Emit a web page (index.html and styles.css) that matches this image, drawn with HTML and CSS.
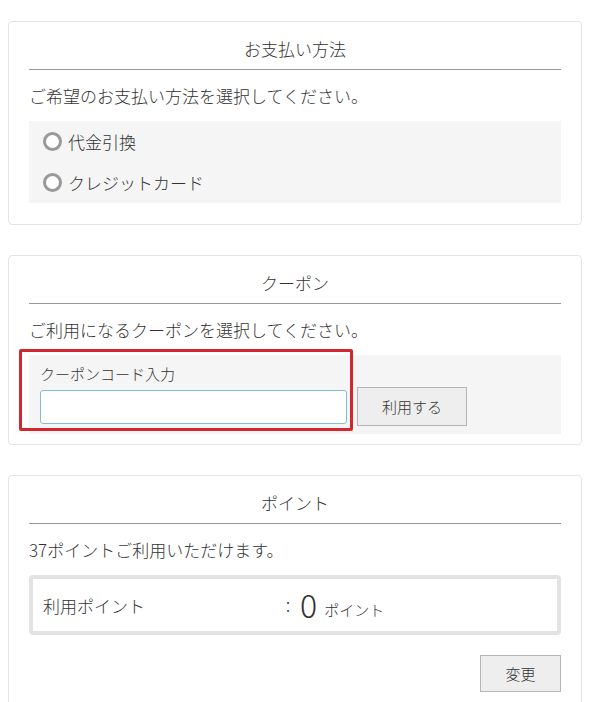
FILE: index.html
```html
<!DOCTYPE html>
<html lang="ja">
<head>
<meta charset="utf-8">
<link rel="stylesheet" href="styles.css">
</head>
<body>
<section class="card card-pay">
  <h2 class="card-title">お支払い方法</h2>
  <p class="desc">ご希望のお支払い方法を選択してください。</p>
  <div class="panel pay-list">
    <label class="radio-row"><span class="radio"></span>代金引換</label>
    <label class="radio-row"><span class="radio"></span>クレジットカード</label>
  </div>
</section>

<section class="card card-coupon">
  <h2 class="card-title">クーポン</h2>
  <p class="desc">ご利用になるクーポンを選択してください。</p>
  <div class="panel coupon">
    <div class="coupon-label">クーポンコード入力</div>
    <div class="coupon-row">
      <input class="coupon-input" type="text">
      <button class="btn btn-use">利用する</button>
    </div>
    <div class="highlight"></div>
  </div>
</section>

<section class="card">
  <h2 class="card-title">ポイント</h2>
  <p class="desc">37ポイントご利用いただけます。</p>
  <div class="point-box">
    <span class="point-label">利用ポイント</span>
    <span class="point-colon">：</span>
    <span class="point-value">0</span>
    <span class="point-unit">ポイント</span>
  </div>
  <div class="actions">
    <button class="btn btn-change">変更</button>
  </div>
</section>
</body>
</html>
```

FILE: styles.css
```css
html, body {
  margin: 0;
  padding: 0;
  background: #fff;
}
body {
  padding: 21px 9px 0 8px;
  font-family: "Noto Sans CJK JP", "Noto Sans", sans-serif;
  font-weight: 300;
  color: #333;
  font-size: 17px;
}
.card {
  border: 1px solid #e4e4e4;
  border-radius: 4px;
  padding: 15px 20px 20px;
  margin-bottom: 30px;
}
.card-pay {
  padding-bottom: 21px;
}
.card-coupon {
  padding-bottom: 10px;
}
.card-title {
  margin: 0;
  font-size: 17px;
  font-weight: 300;
  line-height: 24px;
  text-align: center;
  padding-bottom: 8px;
  border-bottom: 1px solid #999;
}
.desc {
  margin: 14px 0 13px;
  line-height: 24px;
  font-size: 17px;
}
.panel {
  background: #f5f5f5;
}
.pay-list {
  display: flex;
  flex-direction: column;
}
.radio-row {
  height: 41px;
  display: flex;
  align-items: center;
  padding-left: 14px;
  line-height: 24px;
}
.radio {
  width: 19px;
  height: 19px;
  box-sizing: border-box;
  border: 3px solid #999;
  border-radius: 50%;
  background: #fff;
  margin-right: 6px;
}
.coupon {
  position: relative;
  padding: 9px 11px 8px;
}
.coupon-label {
  font-size: 15px;
  line-height: 20px;
  margin-bottom: 3px;
}
.coupon-row {
  display: flex;
  align-items: center;
}
.coupon-input {
  width: 307px;
  height: 34px;
  box-sizing: border-box;
  border: 1px solid #7fbfcf;
  border-radius: 3px;
  background: #fff;
  margin: 0;
  font: inherit;
}
.btn {
  box-sizing: border-box;
  background: #eee;
  border: 1px solid #b5b5b5;
  border-radius: 0;
  font-family: "Noto Sans CJK JP", sans-serif;
  font-weight: 300;
  font-size: 15px;
  color: #333;
  padding: 0;
  margin: 0;
}
.btn-use {
  width: 110px;
  height: 39px;
  margin-left: 10px;
}
.highlight {
  position: absolute;
  left: -10px;
  top: -6px;
  width: 334px;
  height: 82px;
  box-sizing: border-box;
  border: 3px solid #d0282e;
  border-radius: 2px;
  pointer-events: none;
}
.point-box {
  height: 60px;
  box-sizing: border-box;
  border: 4px solid #e3e3e3;
  border-radius: 4px;
  display: flex;
  align-items: center;
  padding-left: 10px;
}
.point-label {
  width: 236px;
  font-size: 17px;
}
.point-colon {
  font-size: 15px;
  width: 18px;
  text-align: center;
}
.point-value {
  font-size: 32px;
  line-height: 1;
  margin-left: 3px;
  margin-right: 7px;
  position: relative;
  top: -1px;
}
.point-unit {
  font-size: 15px;
  position: relative;
  top: 4px;
}
.actions {
  display: flex;
  justify-content: flex-end;
  margin-top: 20px;
}
.btn-change {
  width: 81px;
  height: 37px;
}
```
